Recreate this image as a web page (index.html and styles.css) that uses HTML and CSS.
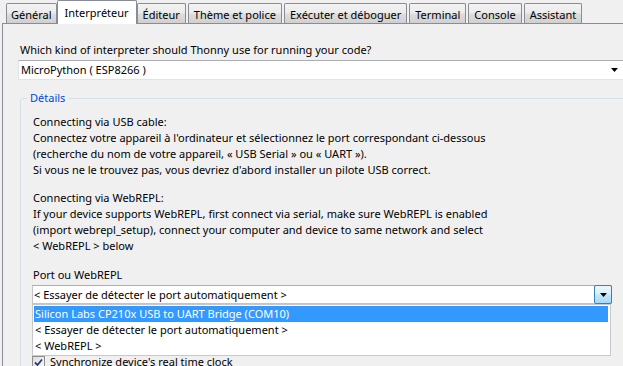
FILE: index.html
```html
<!DOCTYPE html>
<html lang="fr">
<head>
<meta charset="utf-8">
<title>Options de Thonny</title>
<link rel="stylesheet" href="styles.css">
</head>
<body>
<div class="window">
  <div class="tabs">
    <div class="tab">Général</div>
    <div class="tab active">Interpréteur</div>
    <div class="tab">Éditeur</div>
    <div class="tab">Thème et police</div>
    <div class="tab">Exécuter et déboguer</div>
    <div class="tab">Terminal</div>
    <div class="tab">Console</div>
    <div class="tab">Assistant</div>
  </div>
  <div class="panel">
    <div class="question">Which kind of interpreter should Thonny use for running your code?</div>
    <div class="combo main">
      <span class="combo-text">MicroPython ( ESP8266 )</span>
      <span class="combo-arrow"><svg width="7" height="4" viewBox="0 0 7 4"><path d="M0 0h7L3.5 4z" fill="#000"/></svg></span>
    </div>
    <div class="group">
      <div class="group-title">Détails</div>
      <p class="info">Connecting via USB cable:<br>Connectez votre appareil à l'ordinateur et sélectionnez le port correspondant ci-dessous<br>(recherche du nom de votre appareil, « USB Serial » ou « UART »).<br>Si vous ne le trouvez pas, vous devriez d'abord installer un pilote USB correct.</p>
      <p class="info second">Connecting via WebREPL:<br>If your device supports WebREPL, first connect via serial, make sure WebREPL is enabled<br>(import webrepl_setup), connect your computer and device to same network and select<br>&lt; WebREPL &gt; below</p>
      <div class="port-label">Port ou WebREPL</div>
      <div class="port-wrap">
        <div class="combo port">
          <span class="combo-text">&lt; Essayer de détecter le port automatiquement &gt;</span>
          <span class="drop-btn"><svg width="7" height="4" viewBox="0 0 7 4"><path d="M0 0h7L3.5 4z" fill="#000"/></svg></span>
        </div>
        <ul class="dropdown">
          <li class="selected">Silicon Labs CP210x USB to UART Bridge (COM10)</li>
          <li>&lt; Essayer de détecter le port automatiquement &gt;</li>
          <li>&lt; WebREPL &gt;</li>
        </ul>
      </div>
      <div class="checks">
        <div class="check"><span class="box"><svg width="9" height="9" viewBox="0 0 9 9"><path d="M1 4.5l2.5 2.5L8 1.5" fill="none" stroke="#2a3d7a" stroke-width="1.8"/></svg></span>Synchronize device's real time clock</div>
      </div>
    </div>
  </div>
</div>
</body>
</html>
```
FILE: styles.css
```css
* { box-sizing: border-box; }
html, body {
  margin: 0;
  padding: 0;
  background: #f0f0f0;
  overflow: hidden;
  height: 366px;
}
body {
  font-family: "Noto Sans", "Open Sans", sans-serif;
  font-size: 11px;
  line-height: 16px;
  color: #000;
}
.window {
  width: 632px;
}
.tabs {
  display: flex;
  align-items: flex-end;
  height: 23px;
  padding-left: 6px;
  gap: 2px;
}
.tab {
  height: 20px;
  padding: 3px 5px 0;
  border: 1px solid #898c95;
  border-bottom: none;
  border-radius: 2px 2px 0 0;
  background: linear-gradient(#f3f3f3, #ebebeb 45%, #dcdcdc 55%, #d0d0d0);
  white-space: nowrap;
}
.tab:first-child {
  padding: 3px 4px 0;
}
.tab.active {
  height: 24px;
  padding: 4px 7px 0;
  margin: 0 -2px -1px;
  background: #fff;
  position: relative;
  z-index: 1;
}
.panel {
  margin-left: 2px;
  border-top: 1px solid #898c95;
  border-left: 1px solid #898c95;
  padding-left: 15px;
  height: 343px;
}
.question {
  margin-top: 18px;
  padding-left: 2px;
}
.combo {
  display: flex;
  align-items: center;
  justify-content: space-between;
  background: #fff;
  border: 1px solid #e2e3ea;
  border-top-color: #abadb3;
}
.combo.main {
  margin-top: 2px;
  height: 20px;
  margin-right: 8px;
}
.combo-text {
  padding-left: 2px;
  white-space: nowrap;
}
.combo-arrow {
  width: 18px;
  display: flex;
  justify-content: center;
}
.group {
  margin-top: 18px;
  margin-left: 2px;
  border: 1px solid #d5dfe5;
  border-radius: 3px;
  padding: 0 12px;
  height: 300px;
}
.group-title {
  width: max-content;
  margin: -9px 0 0 -6px;
  padding: 0 3px;
  background: #f0f0f0;
  color: #0046d5;
}
.info {
  margin: 8px 0 0;
  white-space: nowrap;
}
.info.second {
  margin-top: 12px;
}
.port-label {
  margin-top: 13px;
}
.port-wrap {
  position: relative;
  margin-top: 2px;
  margin-left: -1px;
  width: 580px;
}
.combo.port {
  height: 19px;
  border-color: #c2c4cc;
  border-top-color: #abadb3;
}
.combo.port .combo-text {
  padding-left: 1px;
}
.drop-btn {
  width: 18px;
  height: 19px;
  margin: -1px -1px -1px 0;
  display: flex;
  align-items: center;
  justify-content: center;
  border: 1px solid #3c7fb1;
  border-radius: 2px;
  background: linear-gradient(#eaf6fd, #d9f0fc 45%, #bee6fd 55%, #a7d9f5);
}
.dropdown {
  position: absolute;
  top: 100%;
  left: 0;
  width: 579px;
  margin: 0;
  padding: 1px;
  list-style: none;
  background: #fff;
  border: 1px solid #c5c9cf;
  z-index: 2;
}
.dropdown li {
  height: 16px;
  line-height: 16px;
  padding-left: 1px;
  white-space: nowrap;
}
.dropdown li.selected {
  background: #3399ff;
  color: #fff;
  margin-right: 1px;
}
.checks {
  margin-top: 48px;
  display: flex;
  flex-direction: column;
}
.check {
  height: 20px;
  display: flex;
  align-items: center;
  gap: 5px;
  margin-left: -1px;
}
.box {
  width: 13px;
  height: 13px;
  border: 1px solid #8e8f8f;
  background: linear-gradient(135deg, #dcdcdc, #fdfdfd);
  display: flex;
  align-items: center;
  justify-content: center;
}
```
